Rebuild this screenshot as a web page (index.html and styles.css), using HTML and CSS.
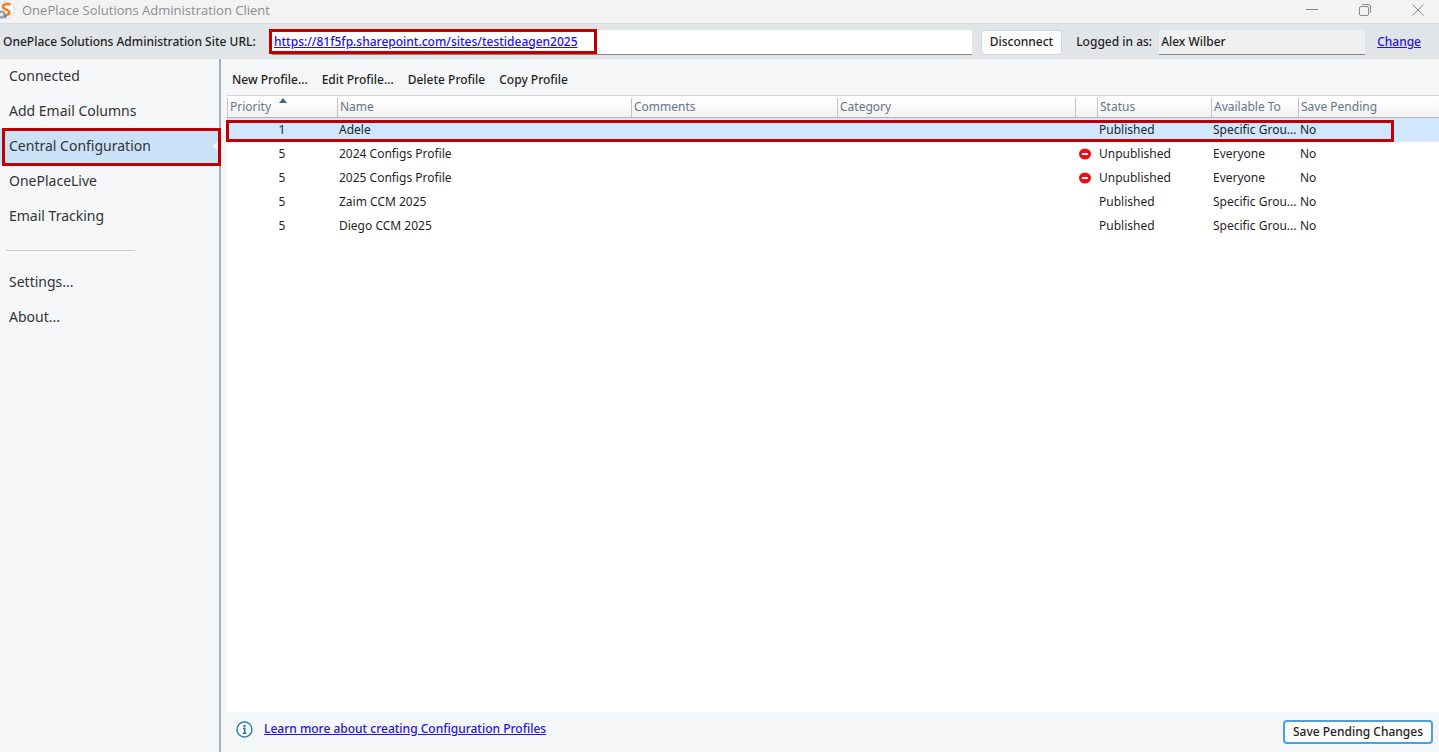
FILE: index.html
```
<!doctype html>
<html lang="en">
<head>
    <meta charset="utf-8">
    <title>OnePlace Solutions Administration Client</title>
    <link rel="stylesheet" href="styles.css">
</head>
<body>

<header class="titlebar">
    <svg class="app-icon" width="16" height="20" viewBox="0 0 16 20" aria-hidden="true">
        <circle cx="6" cy="10" r="8.5" fill="#fff" stroke="#d5d5d5"/>
        <path d="M10.500 4.500C7 3.500 3 4 3 6.700c0 3 6.500 2.800 6.500 5.800 0 2.200-3 2.500-5.500 2" fill="none" stroke="#f47b20" stroke-width="2.600"/>
        <circle cx="1.500" cy="14.500" r="3" fill="#dce3e8" stroke="#8d9ca7" stroke-width="2"/>
        <circle cx="5.500" cy="16.500" r="1.200" fill="#5b7f99"/>
    </svg>
    <h1>OnePlace Solutions Administration Client</h1>
    <div class="window-buttons">
        <button type="button" aria-label="Minimize">
            <svg width="12" height="12" viewBox="0 0 12 12"><path d="M0 5.500h12"/></svg>
        </button>
        <button type="button" aria-label="Restore">
            <svg width="12" height="12" viewBox="0 0 12 12"><rect x=".5" y="2.500" width="9" height="9" rx="1.500"/><path d="M3 .5h6q2.500 0 2.500 2.500v6"/></svg>
        </button>
        <button type="button" aria-label="Close">
            <svg width="12" height="12" viewBox="0 0 12 12"><path d="M.5.5l11 11M11.500.5l-11 11"/></svg>
        </button>
    </div>
</header>

<form class="connection">
    <label class="url-label" for="site-url">OnePlace Solutions Administration Site URL:</label>
    <div class="url-field">
        <input type="text" id="site-url" value="https://81f5fp.sharepoint.com/sites/testideagen2025">
        <span class="url-frame"></span>
    </div>
    <button type="button" class="disconnect">Disconnect</button>
    <label class="user-label" for="user">Logged in as:</label>
    <input type="text" id="user" class="user" value="Alex Wilber" readonly>
    <a href="#" class="change">Change</a>
</form>

<div class="content">
    <nav class="sidebar">
        <a href="#">Connected</a>
        <a href="#">Add Email Columns</a>
        <a href="#" class="active">Central Configuration</a>
        <a href="#">OnePlaceLive</a>
        <a href="#">Email Tracking</a>
        <hr>
        <a href="#">Settings...</a>
        <a href="#">About...</a>
    </nav>

    <main class="main">
        <div class="toolbar">
            <button type="button">New Profile...</button>
            <button type="button">Edit Profile...</button>
            <button type="button">Delete Profile</button>
            <button type="button">Copy Profile</button>
        </div>

        <div class="list">
            <table class="profiles">
                <colgroup>
                    <col class="col-priority">
                    <col class="col-name">
                    <col class="col-comments">
                    <col class="col-category">
                    <col class="col-icon">
                    <col class="col-status">
                    <col class="col-available">
                    <col>
                </colgroup>
                <thead>
                    <tr>
                        <th class="sorted">Priority</th>
                        <th>Name</th>
                        <th>Comments</th>
                        <th>Category</th>
                        <th></th>
                        <th>Status</th>
                        <th>Available To</th>
                        <th>Save Pending</th>
                    </tr>
                </thead>
                <tbody>
                    <tr class="selected">
                        <td>1</td><td>Adele</td><td></td><td></td><td></td>
                        <td>Published</td><td>Specific Grou...</td><td>No</td>
                    </tr>
                    <tr>
                        <td>5</td><td>2024 Configs Profile</td><td></td><td></td>
                        <td><svg class="blocked" width="12" height="12" viewBox="0 0 12 12"><ellipse cx="6" cy="6" rx="6" ry="5.500"/><path d="M3 6h6"/></svg></td>
                        <td>Unpublished</td><td>Everyone</td><td>No</td>
                    </tr>
                    <tr>
                        <td>5</td><td>2025 Configs Profile</td><td></td><td></td>
                        <td><svg class="blocked" width="12" height="12" viewBox="0 0 12 12"><ellipse cx="6" cy="6" rx="6" ry="5.500"/><path d="M3 6h6"/></svg></td>
                        <td>Unpublished</td><td>Everyone</td><td>No</td>
                    </tr>
                    <tr>
                        <td>5</td><td>Zaim CCM 2025</td><td></td><td></td><td></td>
                        <td>Published</td><td>Specific Grou...</td><td>No</td>
                    </tr>
                    <tr>
                        <td>5</td><td>Diego CCM 2025</td><td></td><td></td><td></td>
                        <td>Published</td><td>Specific Grou...</td><td>No</td>
                    </tr>
                </tbody>
            </table>
        </div>

        <footer class="footer">
            <svg width="17" height="17" viewBox="0 0 17 17" aria-hidden="true">
                <circle cx="8.500" cy="8.500" r="7.500" fill="#fff" stroke="#2f86b5" stroke-width="1.500"/>
                <circle cx="8.500" cy="5" r="1.200" fill="#1d6fa3"/>
                <path d="M7 7.500h1.700v4.500M6.800 12.200h3.600" fill="none" stroke="#1d6fa3" stroke-width="1.500"/>
            </svg>
            <a href="#">Learn more about creating Configuration Profiles</a>
            <button type="button" class="save">Save Pending Changes</button>
        </footer>
    </main>
</div>

</body>
</html>
```

FILE: styles.css
```
* {
    box-sizing: border-box;
}

body {
    margin: 0;
    height: 100vh;
    display: flex;
    flex-direction: column;
    background: #f5f6f8;
    color: #1f1f1f;
    font-family: "Noto Sans", "Open Sans", sans-serif;
    font-size: 12px;
    line-height: 16px;
}

button, input {
    font: inherit;
    color: inherit;
}

a {
    color: #2412ef;
}

/* title bar */
.titlebar {
    display: flex;
    align-items: center;
    height: 24px;
    padding-bottom: 3px;
    background: #f3f3f3;
    border-bottom: 1px solid #d9dadb;
}

.titlebar h1 {
    margin: 0 auto 0 6px;
    color: #8c8c8c;
    font-family: "Open Sans", sans-serif;
    font-size: 13px;
    font-weight: normal;
}

.window-buttons {
    display: flex;
}

.window-buttons button {
    display: flex;
    justify-content: center;
    width: 53px;
    padding: 0;
    border: 0;
    background: none;
}

.window-buttons button:last-child {
    margin-right: -5px;
}

.window-buttons svg {
    fill: none;
    stroke: #888;
}

/* connection bar */
.connection {
    display: flex;
    align-items: center;
    height: 35px;
    padding: 1px 18px 0 3px;
    background: #e2e5e8;
    font-weight: 500;
}

.url-label {
    width: 269px;
}

.url-field {
    position: relative;
    flex: 1;
}

.connection input {
    display: block;
    height: 25px;
    padding: 0 2px 1px;
    border: 0;
    border-bottom: 1px solid #868686;
}

.url-field input {
    width: 100%;
    background: #fff;
    color: #2412ef;
    text-decoration: underline;
}

.url-frame {
    position: absolute;
    top: -1px;
    left: -3px;
    width: 328px;
    height: 25px;
    border: 3px solid #c00000;
    pointer-events: none;
}

.disconnect {
    height: 25px;
    margin: 0 14px 0 9px;
    padding: 0 8px;
    border: 1px solid #d4d6d8;
    border-radius: 4px;
    background: #fdfdfd;
    font-weight: 500;
}

.connection .user {
    width: 206px;
    margin: 0 12px 0 7px;
    background: #f0f0f0;
}

/* body */
.content {
    display: flex;
    flex: 1;
    min-height: 0;
}

.sidebar {
    width: 221px;
    border-right: 2px solid #a5b1c2;
    background: #f5f7f9;
    font-size: 14px;
}

.sidebar a {
    display: block;
    height: 35px;
    padding-left: 9px;
    color: #333;
    line-height: 33px;
    text-decoration: none;
}

.sidebar .active {
    position: relative;
    background: #cbe1f7;
}

.sidebar .active::before {
    content: "";
    position: absolute;
    right: 0;
    top: 12px;
    border: 5px solid transparent;
    border-right: 7px solid #f5f7f9;
}

.sidebar .active::after {
    content: "";
    position: absolute;
    inset: -1px -2px -2px 2px;
    border: 3px solid #c00000;
}

.sidebar hr {
    width: 129px;
    margin: 16px 0 14px 6px;
    border: 0;
    border-top: 1px solid #c9cbce;
}

.main {
    display: flex;
    flex: 1;
    flex-direction: column;
    min-width: 0;
    padding-left: 6px;
}

.toolbar {
    display: flex;
    align-items: center;
    gap: 14px;
    height: 36px;
    padding: 6px 0 0 5px;
}

.toolbar button {
    padding: 0;
    border: 0;
    background: none;
    font-weight: 500;
}

/* profile list */
.list {
    flex: 1;
    background: #fff;
}

.profiles {
    width: 100%;
    table-layout: fixed;
    border-collapse: separate;
    border-spacing: 0;
}

.col-priority { width: 110px; }
.col-name { width: 294px; }
.col-comments { width: 206px; }
.col-category { width: 238px; }
.col-icon { width: 22px; }
.col-status { width: 114px; }
.col-available { width: 87px; }

.profiles th {
    position: relative;
    height: 23px;
    padding: 1px 0 0 3px;
    border-top: 1px solid #d4d4d4;
    border-bottom: 1px solid #b5b5b5;
    background: linear-gradient(#fff, #f3f3f3);
    color: #66758a;
    font-weight: normal;
    text-align: left;
    white-space: nowrap;
}

.profiles th::before {
    content: "";
    position: absolute;
    left: 0;
    top: 2px;
    bottom: 0;
    border-left: 1px solid #c4c4c4;
}

.sorted::after {
    content: "";
    position: absolute;
    left: 52px;
    top: 2px;
    border: 4px solid transparent;
    border-top: 0;
    border-bottom: 5px solid #3f687c;
}

.profiles td {
    height: 24px;
    padding: 0 0 0 2px;
    white-space: nowrap;
}

.profiles td:first-child {
    padding: 0;
    text-align: center;
}

.selected {
    position: relative;
    background: #d0e7ff;
}

.selected td:first-child::after {
    content: "";
    position: absolute;
    inset: 2px 45px 0 -1px;
    border: 3px solid #c00000;
}

.blocked {
    display: block;
    margin-left: 2px;
    fill: #f00d12;
    stroke-width: 2px;
}

.blocked path {
    stroke: #fff;
}

/* footer */
.footer {
    display: flex;
    align-items: center;
    height: 40px;
    padding: 0 6px 0 9px;
}

.footer svg {
    margin-bottom: 6px;
}

.footer a {
    margin: 0 auto 6px 11px;
    font-weight: 500;
}

.save {
    height: 24px;
    padding: 0 8px;
    border: 2px solid #4ba0e0;
    border-radius: 4px;
    background: #fdfdfd;
    font-weight: 500;
}
```
